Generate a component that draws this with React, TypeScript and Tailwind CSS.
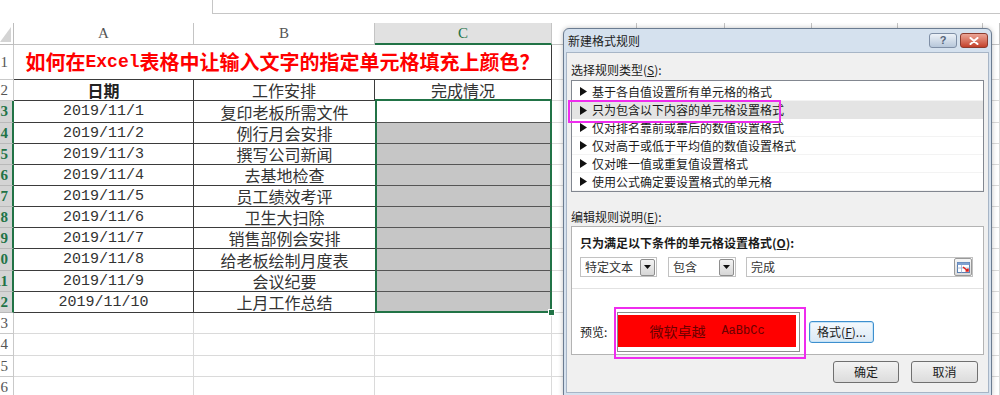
import React from "react";

const extraCols = ["w-[85px]", "w-[88px]", "w-[87px]", "w-[86px]", "w-[85px]", "w-[17px]"];

const tableRows = [
  { n: 3, h: "h-[22px]", d: "2019/11/1", t: "复印老板所需文件" },
  { n: 4, h: "h-[21px]", d: "2019/11/2", t: "例行月会安排" },
  { n: 5, h: "h-[21px]", d: "2019/11/3", t: "撰写公司新闻" },
  { n: 6, h: "h-[21px]", d: "2019/11/4", t: "去基地检查" },
  { n: 7, h: "h-[21px]", d: "2019/11/5", t: "员工绩效考评" },
  { n: 8, h: "h-[21px]", d: "2019/11/6", t: "卫生大扫除" },
  { n: 9, h: "h-[21px]", d: "2019/11/7", t: "销售部例会安排" },
  { n: 10, h: "h-[22px]", d: "2019/11/8", t: "给老板绘制月度表" },
  { n: 11, h: "h-[21px]", d: "2019/11/9", t: "会议纪要" },
  { n: 12, h: "h-[21px]", d: "2019/11/10", t: "上月工作总结" },
];

const emptyRows = [
  { n: 13, h: "h-[21px]" },
  { n: 14, h: "h-[22px]" },
  { n: 15, h: "h-[21px]" },
  { n: 16, h: "h-[21px]" },
];

const rules = [
  "基于各自值设置所有单元格的格式",
  "只为包含以下内容的单元格设置格式",
  "仅对排名靠前或靠后的数值设置格式",
  "仅对高于或低于平均值的数值设置格式",
  "仅对唯一值或重复值设置格式",
  "使用公式确定要设置格式的单元格",
];

function Extra() {
  return (
    <>
      {extraCols.map((w, i) => (
        <div key={i} className={`${w} shrink-0 border-r border-b border-[#dadada]`} />
      ))}
    </>
  );
}

function RowHead({ n, sel }: { n: number; sel: boolean }) {
  return (
    <div
      className={
        sel
          ? "w-[14px] shrink-0 overflow-hidden flex items-center justify-end pr-[4px] bg-[#d4d4d4] border-r-2 border-r-[#217346] border-b border-b-[#b9b9b9] text-[#217346] font-['Liberation_Serif',serif] text-[15px] font-bold"
          : "w-[14px] shrink-0 overflow-hidden flex items-center justify-end pr-[5px] bg-white border-r border-b border-[#c9c9c9] text-[#555] font-['Liberation_Serif',serif] text-[15px]"
      }
    >
      <span className="whitespace-nowrap leading-none">{n}</span>
    </div>
  );
}

function Tri() {
  return (
    <svg width="7" height="9" viewBox="0 0 7 9" className="shrink-0">
      <polygon points="0,0 7,4.5 0,9" fill="#111" />
    </svg>
  );
}

function DropBtn() {
  return (
    <div className="w-[15px] h-[17px] mr-[1px] border border-[#8e8e8e] rounded-[2px] bg-linear-to-b from-[#f4f4f4] to-[#d6d6d6] flex items-center justify-center">
      <svg width="7" height="4" viewBox="0 0 7 4">
        <polygon points="0,0 7,0 3.5,4" fill="#111" />
      </svg>
    </div>
  );
}

export default function App() {
  const cjk = "font-['Noto_Sans_CJK_SC',sans-serif]";
  return (
    <div className="relative w-[1000px] h-[395px] overflow-hidden bg-white">
      {/* formula bar strip */}
      <div className="h-[23px] flex">
        <div className="w-[212px] shrink-0" />
        <div className="flex-1 h-[14px] border-l border-b border-[#c6c6c6]" />
      </div>

      {/* column headers */}
      <div className="flex h-[22px]">
        <div className="w-[14px] shrink-0 border-r border-b border-[#bdbdbd] flex items-end justify-end pb-[2px] pr-[2px]">
          <svg width="11" height="15" viewBox="0 0 11 15">
            <polygon points="11,0 11,15 0,15" fill="#d4d4d4" />
          </svg>
        </div>
        <div className="w-[180px] shrink-0 border-r border-b border-[#c4c4c4] flex items-center justify-center text-[#555] font-['Liberation_Serif',serif] text-[15px]">A</div>
        <div className="w-[181px] shrink-0 border-r border-b border-[#c4c4c4] flex items-center justify-center text-[#555] font-['Liberation_Serif',serif] text-[15px]">B</div>
        <div className="w-[177px] shrink-0 border-r border-r-[#c4c4c4] border-b-2 border-b-[#217346] bg-[#e1e1e1] flex items-center justify-center text-[#217346] font-['Liberation_Serif',serif] text-[15px]">C</div>
        {extraCols.map((w, i) => (
          <div key={i} className={`${w} shrink-0 border-r border-b border-[#c4c4c4]`} />
        ))}
      </div>

      {/* row 1 title */}
      <div className="flex h-[35px]">
        <RowHead n={1} sel={false} />
        <div className={`w-[538px] shrink-0 border-r border-b border-[#3b3b3b] flex items-center justify-center text-[20px] font-bold text-[#ff0000] ${cjk} whitespace-nowrap`}>
          如何在<span className="font-['Liberation_Mono',monospace] text-[18px] font-bold">Excel</span>表格中让输入文字的指定单元格填充上颜色？
        </div>
        <Extra />
      </div>

      {/* row 2 header */}
      <div className={`flex h-[21px] ${cjk} text-[16px] text-[#333]`}>
        <RowHead n={2} sel={false} />
        <div className="w-[180px] shrink-0 border-r border-b border-[#3b3b3b] flex items-center justify-center font-bold text-[#222] leading-none">日期</div>
        <div className="w-[181px] shrink-0 border-r border-b border-[#3b3b3b] flex items-center justify-center leading-none">工作安排</div>
        <div className="w-[177px] shrink-0 border-r border-r-[#3b3b3b] border-b-2 border-b-[#217346] flex items-center justify-center leading-none">完成情况</div>
        <Extra />
      </div>

      {/* data rows */}
      {tableRows.map((r, i) => (
        <div key={r.n} className={`flex ${r.h}`}>
          <RowHead n={r.n} sel={true} />
          <div className="w-[180px] shrink-0 border-r border-b border-[#3b3b3b] flex items-center justify-center font-['Liberation_Mono',monospace] text-[15px] text-[#333] leading-none">
            {r.d}
          </div>
          <div className={`w-[181px] shrink-0 border-b border-[#3b3b3b] flex items-center justify-center ${cjk} text-[16px] text-[#333] leading-none`}>
            {r.t}
          </div>
          <div
            className={
              i === 0
                ? "relative w-[177px] shrink-0 border-x-2 border-x-[#217346] border-b border-b-[#555] bg-white"
                : i === tableRows.length - 1
                ? "relative w-[177px] shrink-0 border-x-2 border-x-[#217346] border-b-2 border-b-[#217346] bg-[#c6c6c6]"
                : "relative w-[177px] shrink-0 border-x-2 border-x-[#217346] border-b border-b-[#555] bg-[#c6c6c6]"
            }
          >
            {i === tableRows.length - 1 && (
              <div className="absolute right-[-5px] bottom-[-5px] w-[7px] h-[7px] bg-[#217346] border border-white" />
            )}
          </div>
          <Extra />
        </div>
      ))}

      {emptyRows.map((r) => (
        <div key={r.n} className={`flex ${r.h}`}>
          <RowHead n={r.n} sel={false} />
          <div className="w-[180px] shrink-0 border-r border-b border-[#dadada]" />
          <div className="w-[181px] shrink-0 border-r border-b border-[#dadada]" />
          <div className="w-[177px] shrink-0 border-r border-b border-[#dadada]" />
          <Extra />
        </div>
      ))}

      {/* dialog */}
      <div className={`absolute left-[563px] top-[28px] w-[429px] h-[368px] rounded-t-[6px] border border-[#6b7c91] bg-[#d5e1ee] flex flex-col ${cjk} text-[12px] text-[#1b1b1b] shadow-[0_0_5px_rgba(0,0,0,0.25)]`}>
        <div className="h-[23px] shrink-0 flex items-center pl-[4px] pr-[3px]">
          <span className="flex-1 text-[12px] text-[#222] leading-none">新建格式规则</span>
          <div className="w-[28px] h-[15px] rounded-[3px] border border-[#7f8fa6] bg-linear-to-b from-[#edf2f8] to-[#b7c7da] flex items-center justify-center">
            <span className="font-['Liberation_Sans',sans-serif] text-[11px] font-bold text-[#55657a] leading-none">?</span>
          </div>
          <div className="ml-[3px] w-[28px] h-[15px] rounded-[3px] border border-[#8c3b2e] bg-linear-to-b from-[#eba596] to-[#c3402a] flex items-center justify-center">
            <svg width="10" height="8" viewBox="0 0 10 8">
              <path d="M1.5 1 L8.5 7 M8.5 1 L1.5 7" stroke="#fff" strokeWidth="2" strokeLinecap="round" />
            </svg>
          </div>
        </div>

        <div className="flex-1 mx-[2px] mb-[2px] border border-[#a7b5c6] bg-[#f0f0f0] px-[4px] flex flex-col">
          <div className="mt-[9px] h-[16px] leading-[16px]">
            选择规则类型(<span className="underline">S</span>):
          </div>
          <div className="relative mt-[2px] h-[112px] shrink-0 border border-[#828790] bg-white pt-[2px]">
            {rules.map((r, i) => (
              <div
                key={i}
                className={
                  i === 1
                    ? "h-[18px] flex items-center pl-[8px] bg-[#e4e4e4] leading-none"
                    : "h-[18px] flex items-center pl-[8px] border-b border-[#f3f3f3] leading-none"
                }
              >
                <Tri />
                <span className="ml-[5px]">{r}</span>
              </div>
            ))}
            <div className="absolute left-[-4px] top-[19px] w-[213px] h-[23px] border-2 border-[#ee2cee]" />
          </div>

          <div className="mt-[17px] h-[16px] leading-[16px]">
            编辑规则说明(<span className="underline">E</span>):
          </div>
          <div className="relative mt-[1px] h-[129px] shrink-0 border border-[#b3b3b3] bg-white flex flex-col">
            <div className="h-[62px] shrink-0 border-b border-[#e2e2e2] pl-[8px] pt-[8px]">
              <div className="h-[16px] leading-[16px] font-bold">
                只为满足以下条件的单元格设置格式(<span className="underline">O</span>):
              </div>
              <div className="mt-[6px] h-[20px] flex">
                <div className="w-[77px] h-[20px] border border-[#c2c2c2] bg-white flex items-center pl-[4px]">
                  <span className="flex-1 text-[#333] leading-none">特定文本</span>
                  <DropBtn />
                </div>
                <div className="ml-[11px] w-[68px] h-[20px] border border-[#c2c2c2] bg-white flex items-center pl-[4px]">
                  <span className="flex-1 text-[#333] leading-none">包含</span>
                  <DropBtn />
                </div>
                <div className="ml-[10px] w-[227px] h-[20px] border border-[#c2c2c2] bg-white flex items-center pl-[4px]">
                  <span className="flex-1 text-[#333] leading-none">完成</span>
                  <div className="w-[18px] h-[18px] border border-[#9a9a9a] rounded-[2px] bg-linear-to-b from-[#f6f6f6] to-[#dadada] flex items-center justify-center">
                    <svg width="13" height="11" viewBox="0 0 13 11">
                      <rect x="0.5" y="0.5" width="12" height="10" fill="#fff" stroke="#5b7fb0" />
                      <rect x="0.5" y="0.5" width="12" height="2.5" fill="#7fa0cf" />
                      <path d="M4.5 3 V10.5 M0.5 6 H12.5" stroke="#9ab1d3" strokeWidth="0.8" />
                      <path d="M6 5 L11 9 M8.5 9 H11 V6.5" stroke="#e0201b" strokeWidth="1.6" fill="none" />
                    </svg>
                  </div>
                </div>
              </div>
            </div>
            <div className="flex-1 pl-[8px] pt-[23px]">
              <div className="flex items-center h-[40px]">
                <span className="w-[37px] shrink-0 leading-none">预览:</span>
                <div className="relative w-[183px] h-[40px] shrink-0 border border-[#8d8d8d] bg-white pt-[2px] pr-[3px] pb-[4px] pl-0">
                  <div className="w-full h-full bg-[#ff0000] flex items-center justify-center text-[#6a0000] whitespace-nowrap">
                    <span className="text-[14px] leading-none">微软卓越</span>
                    <span className="ml-[16px] font-['Liberation_Mono',monospace] text-[12px] leading-none">AaBbCc</span>
                  </div>
                  <div className="absolute left-[-4px] top-[-6px] w-[192px] h-[52px] border-2 border-[#ee2cee]" />
                </div>
                <div className="ml-[9px] w-[65px] h-[22px] rounded-[3px] border border-[#3d8fce] bg-linear-to-b from-[#f4f9fd] to-[#dbe9f5] flex items-center justify-center leading-none shadow-[inset_0_0_0_1px_#c6e3f7]">
                  格式(<span className="underline">F</span>)...
                </div>
              </div>
            </div>
          </div>

          <div className="mt-[6px] flex justify-end pr-[6px] gap-[12px]">
            <div className="w-[66px] h-[22px] rounded-[3px] border border-[#707070] bg-linear-to-b from-[#f3f3f3] to-[#dcdcdc] flex items-center justify-center leading-none">确定</div>
            <div className="w-[67px] h-[22px] rounded-[3px] border border-[#707070] bg-linear-to-b from-[#f3f3f3] to-[#dcdcdc] flex items-center justify-center leading-none">取消</div>
          </div>
        </div>
      </div>
    </div>
  );
}
